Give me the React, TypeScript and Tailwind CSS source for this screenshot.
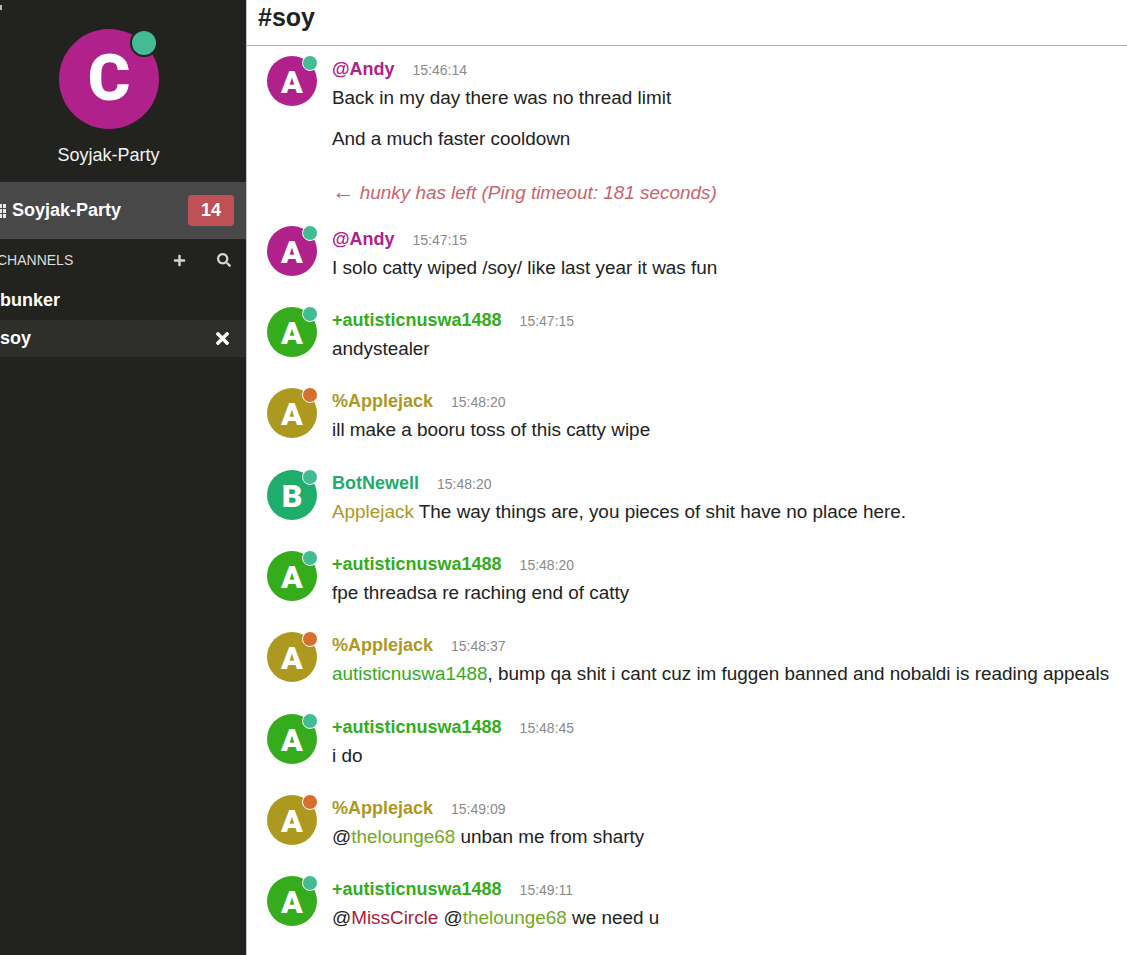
import type { ReactNode } from 'react';
import { FaPlus, FaSearch, FaTimes } from 'react-icons/fa';

const GREEN_DOT = 'bg-[#43bc93]';
const ORANGE_DOT = 'bg-[#d5702f]';

const Nick = ({ cls, children }: { cls: string; children: ReactNode }) => <span className={cls}>{children}</span>;

interface Props {
  letter: string;
  bg: string;
  nick: string;
  nickCls: string;
  time: string;
  dot: string;
  tail?: string;
  children: ReactNode;
}

function Message({ letter, bg, nick, nickCls, time, dot, tail = 'pb-[14.3px]', children }: Props) {
  return (
    <div className={`flex pl-[20px] pt-[10px] gap-[15px] ${tail}`}>
      <div className={`relative w-[50px] h-[50px] rounded-full shrink-0 flex items-center justify-center pt-[2px] text-white text-[32px] font-black font-['Roboto',sans-serif] ${bg}`}>
        {letter}
        <span className={`absolute top-[-1px] right-[-1px] w-[16px] h-[16px] rounded-full border border-white ${dot}`} />
      </div>
      <div className="min-w-0">
        <div className="flex items-baseline gap-[18px] h-[27px]">
          <span className={`text-[18px] font-bold ${nickCls}`}>{nick}</span>
          <span className="text-[14px] text-[#8a8a8a]">{time}</span>
        </div>
        <div className="text-[18.9px] leading-[30px] text-[#222] whitespace-nowrap">{children}</div>
      </div>
    </div>
  );
}

export default function App() {
  return (
    <div className="w-[1127px] h-[955px] overflow-hidden flex bg-white font-['Liberation_Sans',Arial,sans-serif]">
      {/* Sidebar */}
      <aside className="relative w-[247px] h-full shrink-0 bg-[#22231f] border-r border-[#c4c4c4] text-white overflow-hidden flex flex-col">
        <span className="absolute left-0 top-[5px] w-[2px] h-[5px] bg-[#b8b8b8]" />
        <div className="h-[182px] flex flex-col items-center pt-[29px]">
          <div className="relative w-[100px] h-[100px] rounded-full bg-[#b0218b] flex items-center justify-center text-[65px] font-black font-['Roboto',sans-serif] ml-[-28px]">
            C
            <span className="absolute top-0 right-[1px] w-[28px] h-[28px] rounded-full bg-[#43bc93] border-2 border-[#22231f]" />
          </div>
          <div className="mt-[14px] text-[18px] leading-[24px] text-[#f2f2f2] ml-[-29px]">Soyjak-Party</div>
        </div>

        <div className="h-[57px] bg-[#484848] flex items-center justify-between pr-[12px] font-bold text-[18px]">
          <div className="flex items-center gap-[6px]">
            <svg width="6" height="14" viewBox="0 0 6 14" fill="#e8e8e8">
              <path d="M0 0h2v4H0zM3 0h3v4H3zM0 5h2v4H0zM3 5h3v4H3zM0 10h2v4H0zM3 10h3v4H3z" />
            </svg>
            <span>Soyjak-Party</span>
          </div>
          <span className="w-[46px] h-[31px] rounded-[4px] bg-[#bd5155] flex items-center justify-center text-[18px]">14</span>
        </div>

        <div className="h-[42px] flex items-center justify-between pr-[15px] text-[14px] text-[#dcdcdc]">
          <span className="ml-[-3px]">CHANNELS</span>
          <div className="flex items-center gap-[31px] text-[#d4d4d4]">
            <FaPlus size={13} />
            <FaSearch size={14} />
          </div>
        </div>
        <div className="h-[39px] flex items-center font-bold text-[18px]">bunker</div>
        <div className="h-[37px] bg-[#2e2f2b] flex items-center justify-between pr-[14px] font-bold text-[18px]">
          <span>soy</span>
          <FaTimes size={19} />
        </div>
      </aside>

      {/* Chat */}
      <main className="flex-1 min-w-0">
        <header className="h-[46px] border-b border-[#b0b0b0] pl-[11px] pb-[10px] flex items-center text-[25px] font-bold text-[#222]">#soy</header>

        <Message letter="A" bg="bg-[#b0218b]" nick="@Andy" nickCls="text-[#b0218b]" time="15:46:14" dot={GREEN_DOT} tail="pb-[7.8px]">
          <p>Back in my day there was no thread limit</p>
          <p className="mt-[11px]">And a much faster cooldown</p>
          <p className="mt-[24px] italic text-[#c9636c]"><span className="text-[22.5px] leading-none">←</span> hunky has left (Ping timeout: 181 seconds)</p>
        </Message>
        <Message letter="A" bg="bg-[#b0218b]" nick="@Andy" nickCls="text-[#b0218b]" time="15:47:15" dot={GREEN_DOT}>
          I solo catty wiped /soy/ like last year it was fun
        </Message>
        <Message letter="A" bg="bg-[#34ac1c]" nick="+autisticnuswa1488" nickCls="text-[#34ac1c]" time="15:47:15" dot={GREEN_DOT}>
          andystealer
        </Message>
        <Message letter="A" bg="bg-[#ad991f]" nick="%Applejack" nickCls="text-[#ad991f]" time="15:48:20" dot={ORANGE_DOT}>
          ill make a booru toss of this catty wipe
        </Message>
        <Message letter="B" bg="bg-[#1fad6b]" nick="BotNewell" nickCls="text-[#1fad6b]" time="15:48:20" dot={GREEN_DOT}>
          <Nick cls="text-[#ad991f]">Applejack</Nick> The way things are, you pieces of shit have no place here.
        </Message>
        <Message letter="A" bg="bg-[#34ac1c]" nick="+autisticnuswa1488" nickCls="text-[#34ac1c]" time="15:48:20" dot={GREEN_DOT}>
          fpe threadsa re raching end of catty
        </Message>
        <Message letter="A" bg="bg-[#ad991f]" nick="%Applejack" nickCls="text-[#ad991f]" time="15:48:37" dot={ORANGE_DOT}>
          <Nick cls="text-[#34ac1c]">autisticnuswa1488</Nick>, bump qa shit i cant cuz im fuggen banned and nobaldi is reading appeals
        </Message>
        <Message letter="A" bg="bg-[#34ac1c]" nick="+autisticnuswa1488" nickCls="text-[#34ac1c]" time="15:48:45" dot={GREEN_DOT}>
          i do
        </Message>
        <Message letter="A" bg="bg-[#ad991f]" nick="%Applejack" nickCls="text-[#ad991f]" time="15:49:09" dot={ORANGE_DOT}>
          @<Nick cls="text-[#74a81f]">thelounge68</Nick> unban me from sharty
        </Message>
        <Message letter="A" bg="bg-[#34ac1c]" nick="+autisticnuswa1488" nickCls="text-[#34ac1c]" time="15:49:11" dot={GREEN_DOT}>
          @<Nick cls="text-[#a81c3c]">MissCircle</Nick> @<Nick cls="text-[#74a81f]">thelounge68</Nick> we need u
        </Message>
      </main>
    </div>
  );
}
